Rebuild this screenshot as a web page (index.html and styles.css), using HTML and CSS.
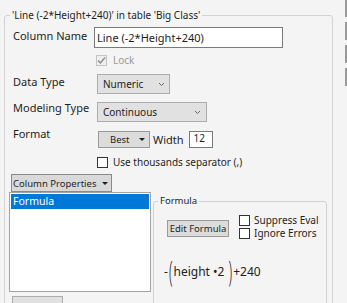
FILE: index.html
```html
<!DOCTYPE html>
<html lang="en">
<head>
    <meta charset="UTF-8">
    <title>Column Info</title>
    <link rel="stylesheet" href="styles.css">
</head>
<body>
<div class="window">
    <div class="main">
        <fieldset class="group">
            <legend>'Line (-2*Height+240)' in table 'Big Class'</legend>
            <div class="fields">
                <div class="row row-name">
                    <label class="row-label" for="colName">Column Name</label>
                    <input class="name-input" id="colName" type="text" value="Line (-2*Height+240)">
                </div>
                <div class="row row-lock">
                    <span class="check check-disabled">
                        <span class="box"><svg width="9" height="9" viewBox="0 0 9 9"><polyline points="1,4.5 3.5,7 8,1.5" fill="none" stroke="#8c8c8c" stroke-width="1.5"/></svg></span>
                        Lock
                    </span>
                </div>
                <div class="row row-type">
                    <span class="row-label">Data Type</span>
                    <div class="select select-numeric">
                        <span>Numeric</span>
                        <svg class="chevron" width="5" height="3" viewBox="0 0 5 3"><polyline points="0,0 2.5,2.5 5,0" fill="none" stroke="#666" stroke-width="1"/></svg>
                    </div>
                </div>
                <div class="row row-model">
                    <span class="row-label">Modeling Type</span>
                    <div class="select select-model">
                        <span>Continuous</span>
                        <svg class="chevron" width="5" height="3" viewBox="0 0 5 3"><polyline points="0,0 2.5,2.5 5,0" fill="none" stroke="#666" stroke-width="1"/></svg>
                    </div>
                </div>
                <div class="row row-format">
                    <span class="row-label">Format</span>
                    <button class="btn btn-best">
                        <span>Best</span>
                        <svg width="6" height="3" viewBox="0 0 6 3"><polygon points="0,0 6,0 3,3" fill="#1e1e1e"/></svg>
                    </button>
                    <span class="width-label">Width</span>
                    <input class="width-input" type="text" value="12">
                </div>
                <div class="row row-sep">
                    <span class="check"><span class="box"></span>Use thousands separator (,)</span>
                </div>
            </div>

            <div class="props">
                <button class="btn btn-props">
                    <span>Column Properties</span>
                    <svg width="6" height="3" viewBox="0 0 6 3"><polygon points="0,0 6,0 3,3" fill="#1e1e1e"/></svg>
                </button>
                <div class="props-body">
                    <div class="prop-col">
                        <ul class="prop-list">
                            <li class="selected">Formula</li>
                        </ul>
                        <button class="btn btn-remove" aria-label="Remove"></button>
                    </div>
                    <fieldset class="formula-group">
                        <legend>Formula</legend>
                        <div class="formula-top">
                            <button class="btn btn-edit">Edit Formula</button>
                            <div class="formula-checks">
                                <span class="check"><span class="box"></span>Suppress Eval</span>
                                <span class="check"><span class="box"></span>Ignore Errors</span>
                            </div>
                        </div>
                        <div class="formula-expr">-<span class="paren">(</span>height &#8226;2 <span class="paren">)</span>+240</div>
                    </fieldset>
                </div>
            </div>
        </fieldset>
    </div>

    <!-- edges of the OK / Cancel / Apply / Help buttons, cut off by the frame -->
    <div class="side-buttons">
        <button class="side-btn" aria-label="OK"></button>
        <button class="side-btn" aria-label="Cancel"></button>
        <button class="side-btn" aria-label="Apply"></button>
        <button class="side-btn" aria-label="Help"></button>
    </div>
</div>
</body>
</html>
```

FILE: styles.css
```css
html, body {
    margin: 0;
    height: 303px;
    overflow: hidden;
}
body {
    background-color: #f4f4f4;
    font-family: "Noto Sans", "Open Sans", sans-serif;
    color: #1e1e1e;
}
button, input {
    font-family: "Noto Sans", "Open Sans", sans-serif;
    color: #1e1e1e;
    margin: 0;
}
.window {
    display: flex;
}
.main {
    width: 345px;
    flex: none;
}

/* outer group box */
.group {
    margin: 8px 0 0 4px;
    width: 329px;
    height: 330px;
    box-sizing: border-box;
    min-width: 0;
    padding: 0;
    border: 1px solid #d2d2d2;
    border-radius: 3px;
}
.group > legend {
    font-size: 10px;
    line-height: 14px;
    padding: 0 2px;
    margin-left: 5px;
}
.fields {
    padding: 5px 0 0 8px;
}
.row {
    display: flex;
    align-items: flex-start;
}
.row-label {
    width: 81px;
    flex: none;
    font-size: 11px;
    line-height: 16px;
}
.row-name .row-label {
    margin-top: 1px;
}
.name-input {
    width: 189px;
    height: 21px;
    box-sizing: border-box;
    border: 1px solid #7a7a7a;
    padding: 0 2px;
    font-size: 11px;
    background-color: #fff;
    outline: none;
}

/* checkboxes */
.check {
    display: flex;
    align-items: center;
    font-size: 10px;
    line-height: 11px;
    white-space: nowrap;
}
.box {
    width: 11px;
    height: 11px;
    box-sizing: border-box;
    border: 1px solid #333;
    background-color: #fff;
    margin-right: 5px;
    display: flex;
    align-items: center;
    justify-content: center;
    flex: none;
}
.check-disabled {
    color: #9a9a9a;
}
.check-disabled .box {
    border-color: #c4c4c4;
    background-color: #f0f0f0;
    margin-right: 6px;
}
.row-lock {
    margin-top: 7px;
}
.row-lock .check {
    margin-left: 83px;
}

/* combo boxes */
.select {
    height: 20px;
    box-sizing: border-box;
    border: 1px solid #adadad;
    background-color: #e1e1e1;
    display: flex;
    align-items: center;
    justify-content: space-between;
    padding: 0 5px;
    font-size: 10px;
    margin-left: 3px;
}
.select-numeric {
    width: 73px;
}
.select-model {
    width: 110px;
    padding-right: 6px;
}
.row-type {
    margin-top: 8px;
}
.row-model {
    margin-top: 8px;
}
.row-model .row-label {
    margin-top: -2px;
}

/* format row */
.row-format {
    margin-top: 9px;
}
.row-format .row-label {
    margin-top: -5px;
}
.btn {
    box-sizing: border-box;
    border: 1px solid #9a9a9a;
    background-color: #dcdcdc;
    padding: 0;
    font-size: 9.5px;
    cursor: pointer;
}
.btn-best {
    width: 52px;
    height: 17px;
    margin-left: 4px;
    display: flex;
    align-items: center;
    gap: 9px;
    padding-left: 11px;
}
.width-label {
    font-size: 11px;
    line-height: 17px;
    margin-left: 3px;
}
.width-input {
    width: 24px;
    height: 17px;
    box-sizing: border-box;
    border: 1px solid #7a7a7a;
    padding: 0 0 4px 4px;
    margin-left: 5px;
    font-size: 10px;
    background-color: #fff;
    outline: none;
}
.row-sep {
    margin-top: 9px;
}
.row-sep .check {
    margin-left: 84px;
}

/* column properties */
.props {
    margin-top: 6px;
    padding-left: 4px;
}
.btn-props {
    width: 101px;
    height: 18px;
    margin-left: 2px;
    display: flex;
    align-items: center;
    justify-content: space-between;
    padding: 0 3px 0 1px;
    background-color: #d9d9d9;
    border-color: #8a8a8a;
}
.props-body {
    display: flex;
    align-items: flex-start;
}
.prop-col {
    width: 142px;
    flex: none;
}
.prop-list {
    list-style: none;
    margin: 0;
    height: 100px;
    box-sizing: border-box;
    border: 1px solid #a3a3a3;
    background-color: #fff;
    padding: 1px;
}
.prop-list li {
    height: 15px;
    line-height: 15px;
    font-size: 10.5px;
    padding-left: 2px;
}
.prop-list .selected {
    background-color: #0078d7;
    color: #fff;
}
.btn-remove {
    display: block;
    width: 51px;
    height: 22px;
    margin: 4px 0 0 3px;
    background-color: #e1e1e1;
    border-color: #adadad;
}

/* formula group */
.formula-group {
    margin: 2px 0 0 2px;
    width: 174px;
    height: 140px;
    box-sizing: border-box;
    min-width: 0;
    padding: 0;
    border: 1px solid #d2d2d2;
    border-radius: 3px;
}
.formula-group > legend {
    font-size: 9.5px;
    line-height: 14px;
    padding: 0 2px;
    margin-left: 4px;
}
.formula-top {
    display: flex;
    align-items: flex-start;
    margin-top: 7px;
    padding-left: 13px;
}
.btn-edit {
    width: 62px;
    height: 17px;
    margin-top: 5px;
    white-space: nowrap;
}
.formula-checks {
    display: flex;
    flex-direction: column;
    gap: 2px;
    margin-left: 10px;
}
.formula-checks .box {
    margin-right: 4px;
}
.formula-expr {
    margin-top: 17px;
    padding-left: 10px;
    font-size: 12px;
    line-height: 30px;
    white-space: pre;
}
.paren {
    display: inline-block;
    font-size: 13px;
    font-weight: 300;
    transform: scaleY(2.2);
    margin: 0 1px;
}

/* dialog buttons at the right edge */
.side-buttons {
    display: flex;
    flex-direction: column;
    gap: 5px;
    margin-top: -1px;
}
.side-btn {
    width: 80px;
    height: 18px;
    border: 1px solid #9a9a9a;
    border-left-width: 2px;
    background-color: #e1e1e1;
    padding: 0;
}
```
